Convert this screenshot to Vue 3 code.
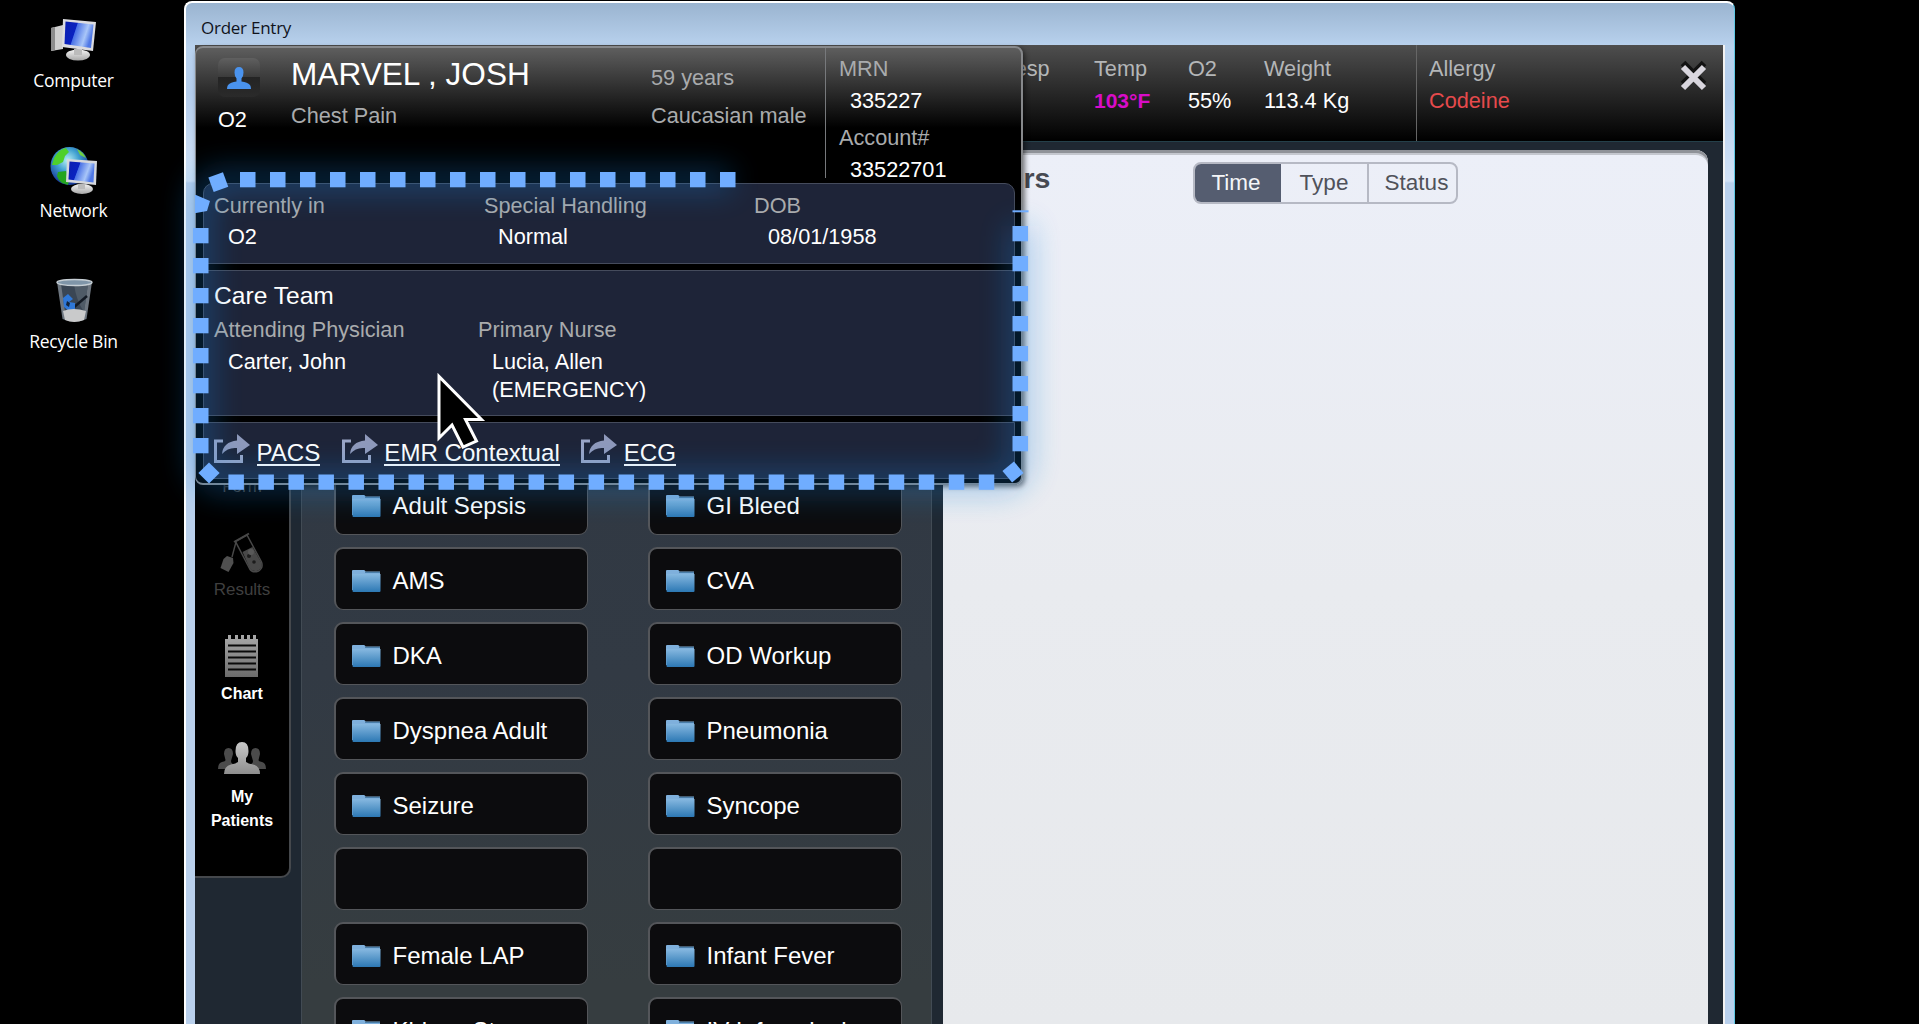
<script setup>
const vitals = [
  { label: 'Resp', value: '', width: 95 },
  { label: 'Temp', value: '103°F', width: 94, tone: 'hot' },
  { label: 'O2', value: '55%', width: 76 },
  { label: 'Weight', value: '113.4 Kg', width: 151 }
]
const orders = [
  'Chest Pain Adult', 'Chest Pain',
  'Adult Sepsis', 'GI Bleed',
  'AMS', 'CVA',
  'DKA', 'OD Workup',
  'Dyspnea Adult', 'Pneumonia',
  'Seizure', 'Syncope',
  '', '',
  'Female LAP', 'Infant Fever',
  'Kidney Stone', 'IV Infusedani'
]
const links = ['PACS', 'EMR Contextual', 'ECG']

// Square markers of the highlight frame round the patient details
const dots = []
for (let i = 0; i < 17; i++) dots.push({ x: 240 + i * 30, y: 172 })
for (let i = 0; i < 8; i++) dots.push({ x: 193, y: 228 + i * 30 })
for (let i = 0; i < 26; i++) dots.push({ x: 228.4 + i * 30.015, y: 474.5 })
for (let i = 0; i < 8; i++) dots.push({ x: 1012.5, y: 226 + i * 30 })
</script>

<template>
  <div class="screen">
    <aside class="desktop">
      <div class="shortcut">
        <svg width="48" height="44" viewBox="0 0 48 44">
          <defs>
            <linearGradient id="scr" x1="0" x2="1" y1="0" y2=".3">
              <stop offset="0" stop-color="#0b1fb0" /><stop offset=".42" stop-color="#0a22c0" />
              <stop offset=".45" stop-color="#4a72e6" /><stop offset=".8" stop-color="#a9c6f8" /><stop offset="1" stop-color="#4f78e6" />
            </linearGradient>
            <linearGradient id="gry" x1="0" x2="0" y1="0" y2="1">
              <stop offset="0" stop-color="#f4f4f4" /><stop offset="1" stop-color="#a8a8a8" />
            </linearGradient>
          </defs>
          <path d="M2 10l12-3v24l-12 2z" fill="#cfcfcf" /><path d="M2 10l4-1v23l-4 1z" fill="#8c8c8c" />
          <ellipse cx="29" cy="37" rx="12" ry="5.500" fill="url(#gry)" />
          <path d="M25 31h8v6h-8z" fill="#bbb" />
          <path d="M14 1l33 3-3 29-31-4z" fill="#dcdce0" />
          <path d="M16.500 3.500l28 3-2.500 23.500-26.500-4z" fill="url(#scr)" />
        </svg>
        <span>Computer</span>
      </div>
      <div class="shortcut net">
        <svg width="48" height="50" viewBox="0 0 48 50">
          <defs>
            <radialGradient id="earth" cx=".45" cy=".35" r=".6">
              <stop offset="0" stop-color="#b8f0f4" /><stop offset=".5" stop-color="#3f9fd0" /><stop offset="1" stop-color="#1b3f9c" />
            </radialGradient>
          </defs>
          <circle cx="19.500" cy="20" r="19" fill="url(#earth)" />
          <path d="M4 12q5-9 12-10l3 4-4 4-2 6-6 3-5 0z" fill="#4fd02a" />
          <path d="M8 26l8-1 4 6-2 8-6-2q-4-3-5-7z" fill="#25a51f" />
          <path d="M27 3q6 3 9 9l-6-3z" fill="#6fcf3f" />
          <ellipse cx="32" cy="43" rx="11" ry="5" fill="url(#gry)" />
          <path d="M28 38h7v5h-7z" fill="#bbb" />
          <path d="M17 13l30 2-1 24-30-3z" fill="#d6d8dc" />
          <path d="M19.500 15.500l25 2-1 19-25-3z" fill="url(#scr)" />
        </svg>
        <span>Network</span>
      </div>
      <div class="shortcut bin">
        <svg width="48" height="46" viewBox="0 0 48 46">
          <path d="M7 4h35l-5.500 37q-11.500 5-24 0z" fill="#6d7680" />
          <path d="M11 6h27l-4 28h-19z" fill="#3a4654" />
          <path d="M24 6h14l-4 28q-8-12-10-28z" fill="#55606c" opacity=".8" />
          <path d="M37 18l-14 12" stroke="#131a24" stroke-width="2.500" />
          <path d="M13 20l5-4 5 5-4 3 6 1v7l-5 2-6-5z" fill="#2f78d8" />
          <path d="M17 23l3 2-1 4-3-2z" fill="#12243c" />
          <path d="M13 33q10-4 23 0l-2 9q-10 4-19 0z" fill="#c9cacb" />
          <ellipse cx="24.500" cy="4.500" rx="17.500" ry="3" fill="#7f95a8" stroke="#c6ced4" stroke-width="1.400" />
        </svg>
        <span>Recycle Bin</span>
      </div>
    </aside>

    <main class="window">
      <div class="titlebar">Order Entry</div>
      <div class="client">
        <header class="vitals">
          <div class="vital-list">
            <div v-for="v in vitals" :key="v.label" class="vital" :style="{ width: v.width + 'px' }">
              <span class="label">{{ v.label }}</span>
              <span class="value" :class="v.tone">{{ v.value }}</span>
            </div>
          </div>
          <div class="allergy">
            <span class="label">Allergy</span>
            <span class="value alert">Codeine</span>
          </div>
          <svg class="close" width="28" height="34" viewBox="0 0 28 34">
            <path d="M3 4l21 21M24 4L3 25" stroke="#121212" stroke-width="6.500" />
            <path d="M3 8l21 21M24 8L3 29" stroke="#d9d6de" stroke-width="6" />
          </svg>
        </header>

        <div class="body">
          <nav class="sidebar">
            <div class="nav-item dim hidden-top"><span>Form</span></div>
            <div class="nav-item dim results">
              <svg width="44" height="42" viewBox="0 0 44 42">
                <path d="M14 10L29 1.500" stroke="#484848" stroke-width="2" />
                <path d="M15.500 9.500L27 3l14.500 27q2 6-3 9-6 2.500-9-2.500z" fill="none" stroke="#484848" stroke-width="1.500" />
                <path d="M22.500 20l10-5 8.500 15q2 6-3 8.500-5.500 2-8.500-2.500z" fill="#484848" />
                <circle cx="29" cy="24" r="2" fill="#1c1c1c" /><circle cx="34" cy="30" r="1.800" fill="#1c1c1c" /><circle cx="31" cy="20" r="3" fill="#585858" />
                <path d="M16 10l-4 15" stroke="#484848" stroke-width="1.400" />
                <path d="M7 24l6 2 .5 5-5 9-8-4 3-9z" fill="#505050" />
              </svg>
              <span>Results</span>
            </div>
            <div class="nav-item chart">
              <svg width="34" height="44" viewBox="0 0 34 44">
                <defs>
                  <linearGradient id="pad" x1="0" x2="0" y1="0" y2="1">
                    <stop offset="0" stop-color="#a9a9a9" /><stop offset="1" stop-color="#6c6c6c" />
                  </linearGradient>
                </defs>
                <path d="M0 5h3V1h3v4h4V1h3v4h3V1h3v4h3V1h3v4h3V1h3v4h2v38H0z" fill="url(#pad)" />
                <path d="M3 11.500h28M3 17.500h28M3 23.500h28M3 29.500h28M3 35.500h28" stroke="#0a0a0a" stroke-width="2" />
              </svg>
              <span>Chart</span>
            </div>
            <div class="nav-item patients">
              <svg width="48" height="33" viewBox="0 0 48 33">
                <defs>
                  <linearGradient id="ppl" x1="0" x2="0" y1="0" y2="1">
                    <stop offset="0" stop-color="#c8c8c8" /><stop offset="1" stop-color="#8e8e8e" />
                  </linearGradient>
                </defs>
                <path d="M6 12q0-6 4.500-6t4.500 6l-2 7q0 3 4 4v4H0q0-6 4-7 4-1 3.500-2z" fill="#4b4b4b" />
                <path d="M42 12q0-6-4.500-6t-4.500 6l2 7q0 3-4 4v4h17q0-6-4-7-4-1-3.500-2z" fill="#4b4b4b" />
                <path d="M17.500 9q0-9 6.500-9t6.500 9q0 5-2.500 7v4q2 1.500 7 2.500 7 1.500 7 9.500H6q0-8 7-9.500 5-1 7-2.500v-4q-2.500-2-2.500-7z" fill="url(#ppl)" />
              </svg>
              <span>My<br>Patients</span>
            </div>
          </nav>

          <section class="orders">
            <button v-for="(o, i) in orders" :key="i" class="order">
              <svg v-if="o" width="29" height="22" viewBox="0 0 29 22">
                <defs>
                  <linearGradient :id="'f' + i" x1="0" x2="0" y1="0" y2="1">
                    <stop offset="0" stop-color="#86b8e0" /><stop offset="1" stop-color="#2c78b4" />
                  </linearGradient>
                </defs>
                <path d="M0 1q0-1 1-1h11q1 0 1.500 1.500H28V20H0z" fill="#7fb0dc" />
                <path d="M0 4h28.500v17q0 1-1 1h-26q-1 0-1-1z" :fill="`url(#f${i})`" />
                <path d="M13 2.500h15" stroke="#4a7ea8" stroke-width="1" />
              </svg>
              <span v-if="o">{{ o }}</span>
            </button>
          </section>

          <section class="panel">
            <h2>Orders</h2>
            <div class="tabs">
              <span class="tab active">Time</span>
              <span class="tab">Type</span>
              <span class="tab last">Status</span>
            </div>
          </section>
        </div>
      </div>
    </main>

    <div class="popup">
      <div class="patient">
        <div class="who">
          <div class="avatar">
            <svg width="24" height="22" viewBox="0 0 24 22">
              <path d="M7.500 5.500q0-5.500 4.500-5.500t4.500 5.500q0 4-2 6v3q6 .8 8.500 3.500 1 1.500 1 4H0q0-2.500 1-4 2.500-2.700 8.500-3.500v-3q-2-2-2-6z" fill="#4a93ee" />
            </svg>
          </div>
          <span class="white">O2</span>
        </div>
        <div class="name">
          <span class="full">MARVEL , JOSH</span>
          <span class="grey">Chest Pain</span>
        </div>
        <div class="demo">
          <span class="grey">59 years</span>
          <span class="grey">Caucasian male</span>
        </div>
        <div class="ids">
          <span class="grey">MRN</span>
          <span class="white val">335227</span>
          <span class="grey acct">Account#</span>
          <span class="white val">33522701</span>
        </div>
      </div>

      <div class="block first">
        <div><span class="grey">Currently in</span><span class="white val">O2</span></div>
        <div><span class="grey">Special Handling</span><span class="white val">Normal</span></div>
        <div><span class="grey">DOB</span><span class="white val">08/01/1958</span></div>
      </div>
      <div class="block team">
        <span class="heading">Care Team</span>
        <div class="members">
          <div><span class="grey">Attending Physician</span><span class="white val">Carter, John</span></div>
          <div><span class="grey">Primary Nurse</span><span class="white val">Lucia, Allen<br>(EMERGENCY)</span></div>
        </div>
      </div>
      <div class="block links">
        <a v-for="l in links" :key="l">
          <svg width="36" height="30" viewBox="0 0 36 30">
            <path d="M9 7H1.500v20.500h26V21" fill="none" stroke="#9aa5c6" stroke-width="3" />
            <path d="M8 20q1-12 15-13.500V0l13 11-13 9v-6q-9-1-15 6z" fill="#8f99bb" />
          </svg>
          <span>{{ l }}</span>
        </a>
      </div>
    </div>

    <svg class="overlay" width="1919" height="1024" viewBox="0 0 1919 1024">
      <defs>
        <filter id="glow" x="-20%" y="-40%" width="140%" height="180%">
          <feGaussianBlur stdDeviation="15" />
        </filter>
      </defs>
      <path d="M730 180H224Q201 180 201 204V458Q201 482 225 482H998Q1020 482 1020 458V226" fill="none" stroke="#1580d8" stroke-width="20" opacity=".4" filter="url(#glow)" />
      <g fill="#70adff">
        <rect v-for="(d, i) in dots" :key="i" :x="d.x" :y="d.y" width="15.500" height="15.300" />
        <rect x="1012.500" y="210.300" width="16" height="2" />
        <rect x="210.500" y="174.500" width="15.500" height="15.500" transform="rotate(-20 218 182)" />
        <path d="M196 195l14 6-3 10-11 2h-1v-18z" />
        <rect x="201.500" y="465.500" width="15" height="15" transform="rotate(45 209 473)" />
        <rect x="1005.500" y="464.500" width="15" height="15" transform="rotate(50 1013 472)" />
      </g>
      <path d="M439 376.500V438L452 425L463 447L476.500 441L465.500 419.500H481.500Z" fill="#000" stroke="#fff" stroke-width="3" />
    </svg>
  </div>
</template>

<style>
html, body { margin: 0; background: #000; overflow: hidden; }
</style>

<style scoped>
* { box-sizing: border-box; }
.screen {
  position: relative; display: flex; width: 1919px; height: 1024px; overflow: hidden;
  background: #000; font-family: "Liberation Sans", Arial, sans-serif; font-size: 21.700px; line-height: 28px; color: #fff;
}
.desktop { width: 184px; padding: 18px 37px 0 0; display: flex; flex-direction: column; align-items: center; }
.shortcut {
  display: flex; flex-direction: column; align-items: center; height: 128px;
  font: 17.500px/24px "Open Sans", "Noto Sans", sans-serif; letter-spacing: -.25px; white-space: nowrap;
}
.shortcut span { margin-top: 6px; }
.shortcut.net { height: 132px; }
.shortcut.net span { margin-top: 2px; }
.shortcut.bin span { margin-top: 5px; }

.window {
  width: 1551px; height: 1030px; margin-top: 1px; padding: 0 9px 0 9px; flex: none;
  background: linear-gradient(#9ab4d0 0, #b9d2ee 44px, #b4cdec 90px, #d2e2f6 178px, #b9d0ec 180px);
  border: 2px solid #fff; border-right: 1px solid #5fc8e4; border-radius: 8px 8px 0 0; overflow: hidden;
  display: flex; flex-direction: column;
}
.titlebar {
  height: 42px; flex: none; padding: 13px 0 0 6px; color: #10131c;
  font: 17px/24px "Open Sans", "Noto Sans", sans-serif; letter-spacing: -.25px;
}
.client { flex: 1; min-height: 0; background: #1f2832; border-right: 2px solid #f2f2f2; display: flex; flex-direction: column; }
.vitals { height: 96px; flex: none; display: flex; background: linear-gradient(#4e4e4e, #000); }
.vital-list { width: 1221px; padding: 10px 0 0 804px; display: flex; }
.vital, .allergy { display: flex; flex-direction: column; gap: 4px; flex: none; }
.allergy { width: 263px; padding: 10px 0 0 12px; border-left: 1px solid #666; }
.label { color: #b4b6b8; }
.value.hot { color: #d80cc8; font-weight: bold; font-size: 21px; }
.value.alert { color: #e64a4c; }
.value { white-space: nowrap; height: 28px; }
.close { margin: 14px 0 0 1px; }

.body { flex: 1; min-height: 0; display: flex; border-top: 1px solid #24404a; }
.sidebar {
  width: 96px; height: 736px; background: #000; border: 1px solid #45484c; border-width: 0 2px 2px 0; border-radius: 0 0 10px 0;
  display: flex; flex-direction: column; align-items: center; text-align: center;
}
.nav-item { display: flex; flex-direction: column; align-items: center; font-size: 16px; line-height: 24px; font-weight: bold; }
.nav-item.dim { color: #3f3f3f; font-weight: normal; font-size: 17px; }
.hidden-top { margin-top: 329px; height: 61px; padding-top: 4px; }
.results { height: 102px; }
.results span { margin-top: 4px; }
.chart { height: 108px; }
.chart span { margin-top: 4px; }
.patients span { margin-top: 10px; }

.orders {
  width: 631px; margin-left: 10px; padding: 255px 0 0 32px; border: 1px solid #424b54; border-width: 0 1px;
  background: linear-gradient(#2f3742, #323a44 60%, #363d40 95%);
  display: grid; grid-template-columns: 254px 254px; grid-auto-rows: 63px; gap: 12px 60px; align-content: start; overflow: hidden;
}
.order {
  display: flex; align-items: center; gap: 12px; padding: 1px 0 0 15.500px; margin: 0;
  background: #0c0c0e; border: 2px solid #54565a; border-width: 2px 1px 1px 2px; border-radius: 9px;
  color: #fff; font: 24px/30px "Liberation Sans", Arial, sans-serif; white-space: nowrap; text-align: left;
}
.order svg { margin-top: 2px; }
.order span { margin-top: 2px; }

.panel {
  width: 765px; margin: 8px 0 0 11px; border-radius: 0 12px 0 0; display: flex; align-items: flex-start;
  background: linear-gradient(#eceff8, #e9ebef 50%, #e7e9ec); box-shadow: inset 0 3px #8f9298, inset 0 5px #c4c7ce;
}
h2 { margin: 12px 0 0 14px; width: 236px; font-size: 28.500px; line-height: 32px; color: #474a52; }
.tabs { margin-top: 12px; display: flex; height: 42px; border: 2px solid #b6b9c4; border-radius: 8px; overflow: hidden; color: #50525a; font-size: 22.500px; line-height: 37px; }
.tab { width: 88px; text-align: center; border-right: 2px solid #b6b9c4; }
.tab.active { background: #555d70; color: #f4f5f8; margin: -2px 0 -2px -2px; line-height: 41px; border: 0; padding-right: 2px; }
.tab.last { border: 0; padding-left: 8px; width: 87px; }

.popup {
  position: absolute; left: 195px; top: 46px; width: 828px; height: 439px; padding: 0 6px 0 7px;
  background: linear-gradient(#5e5e5e 0, #2a2a2a 44px, #000 80px, #000); border: 2px solid #87898c; border-width: 2px 2px 2px 1px; border-radius: 8px;
  display: flex; flex-direction: column; box-shadow: 2px 2px 5px rgba(0, 0, 0, .5);
}
.popup span { display: block; white-space: nowrap; }
.grey { color: #a9abad; }
.white { color: #fff; }
.patient { height: 135px; flex: none; display: flex; }
.who { width: 87px; padding: 10px 0 0 15px; }
.who .white { margin-top: 9px; }
.avatar { width: 42px; height: 39px; border-radius: 7px; background: linear-gradient(#606060, #3c3c3c 48%, #242424 50%, #2a2a2a); display: flex; align-items: center; justify-content: center; }
.name { width: 361px; padding-top: 8px; }
.name .full { font-size: 31.600px; line-height: 36px; margin-left: 1px; margin-bottom: 10px; }
.name .grey { margin-left: 1px; }
.demo { width: 174px; padding-top: 16px; display: flex; flex-direction: column; gap: 10px; }
.ids { height: 130px; padding: 7px 0 0 13px; border-left: 1px solid #77797c; }
.ids .val { margin: 4px 0 0 11px; }
.ids .acct { margin-top: 9px; }
.block { background: #1e2438; border: 1px solid #454b5c; flex: none; padding-left: 10px; }
.first { height: 81px; border-radius: 10px 10px 0 0; padding-top: 8px; display: grid; grid-template-columns: 270px 270px auto; }
.block .val { margin: 4px 0 0 14px; }
.first .val { margin-top: 3px; }
.team { height: 146px; margin-top: 6px; padding-top: 10px; }
.heading { font-size: 24.600px; line-height: 30px; }
.members { display: grid; grid-template-columns: 264px auto; margin-top: 5px; }
.links { height: 57px; margin-top: 6px; display: flex; gap: 21.500px; padding-top: 11px; font-size: 24.100px; border-radius: 0 0 8px 8px; }
.links a { display: flex; gap: 6.500px; height: 33px; }
.links a span { line-height: 29px; margin-top: 4px; height: 28px; border-bottom: 2px solid #fff; }
.overlay { position: absolute; inset: 0; pointer-events: none; }
</style>
